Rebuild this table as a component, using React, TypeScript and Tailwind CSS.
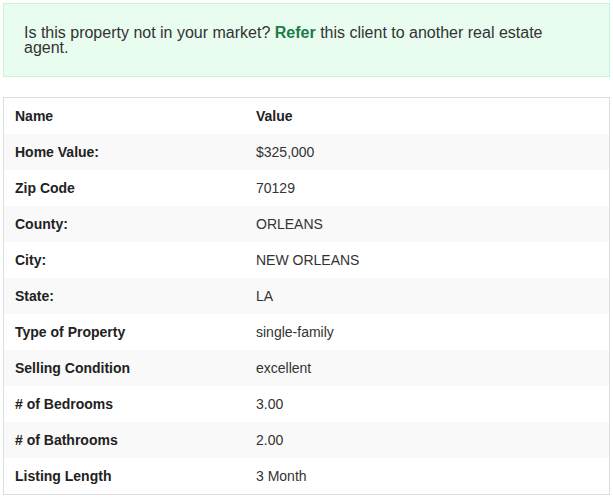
const rows: [string, string][] = [
  ['Home Value:', '$325,000'],
  ['Zip Code', '70129'],
  ['County:', 'ORLEANS'],
  ['City:', 'NEW ORLEANS'],
  ['State:', 'LA'],
  ['Type of Property', 'single-family'],
  ['Selling Condition', 'excellent'],
  ['# of Bedrooms', '3.00'],
  ['# of Bathrooms', '2.00'],
  ['Listing Length', '3 Month'],
];

export default function App() {
  return (
    <div className="min-h-screen bg-white p-[3px] font-['Liberation_Sans',Arial,sans-serif] text-[#333]">
      <div className="border border-[#c3f5d9] bg-[#e8fcf0] px-5 pt-[21px] pb-[21px] text-[16px] leading-[15px] text-[#333]">
        Is this property not in your market?{' '}
        <a href="#" className="font-bold text-[#1e7a46]">
          Refer
        </a>{' '}
        this client to another real estate agent.
      </div>

      <div className="mt-[20px] border border-[#ddd]">
        <table className="w-full border-collapse text-left text-[14px]">
          <thead>
            <tr className="h-[36px]">
              <th className="w-[240px] px-[11px] font-bold text-[#222]">Name</th>
              <th className="px-[12px] font-bold text-[#222]">Value</th>
            </tr>
          </thead>
          <tbody>
            {rows.map(([name, value], i) => (
              <tr key={name} className={`h-[36px] ${i % 2 === 0 ? 'bg-[#f9f9f9]' : 'bg-white'}`}>
                <td className="px-[11px] font-bold text-[#222]">{name}</td>
                <td className="px-[12px] text-[#333]">{value}</td>
              </tr>
            ))}
          </tbody>
        </table>
      </div>
    </div>
  );
}
